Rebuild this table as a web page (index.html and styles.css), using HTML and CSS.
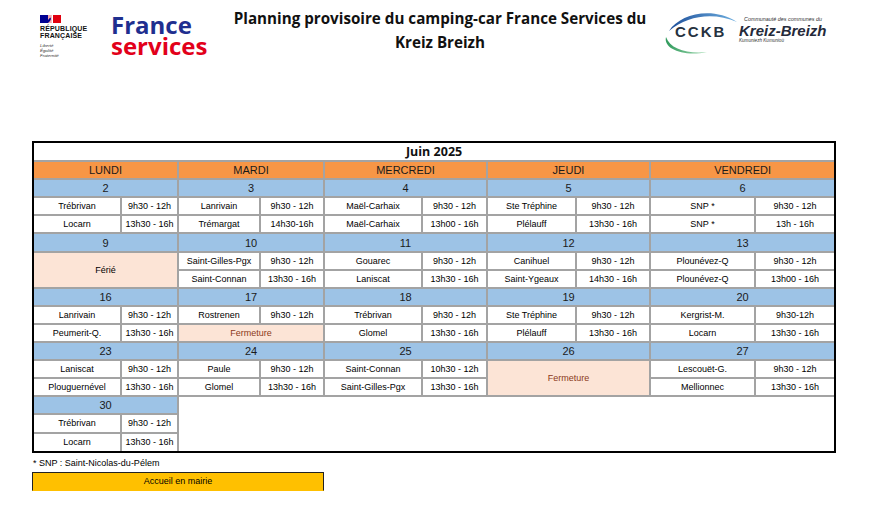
FILE: index.html
```html
<!DOCTYPE html>
<html lang="fr">
<head>
<meta charset="utf-8">
<title>Planning provisoire du camping-car France Services du Kreiz Breizh</title>
<link rel="stylesheet" href="styles.css">
</head>
<body>
<header class="top">
  <div class="rf">
    <svg class="rf-flag" width="21" height="8" viewBox="0 0 21 8">
      <rect x="0" y="0" width="8" height="8" fill="#000091"/>
      <rect x="13" y="0" width="8" height="8" fill="#e1000f"/>
      <path d="M8 0 L12 0 C11 1.5 12.5 2.5 11.5 4 C12.5 5 11 6.5 12 8 L8 8 Z" fill="#e1000f" opacity="0.35"/>
      <path d="M8 8 L8 5 C9 4 9.5 3 10.5 2.5 L11 4 L10 6 Z" fill="#000091"/>
    </svg>
    <div class="rf-name">RÉPUBLIQUE<br>FRANÇAISE</div>
    <div class="rf-motto">Liberté<br>Égalité<br>Fraternité</div>
  </div>
  <div class="fs">
    <div class="fs-france">France</div>
    <div class="fs-services">services</div>
  </div>
  <h1 class="title">Planning provisoire du camping-car France Services du<br>Kreiz Breizh</h1>
  <div class="cckb">
    <svg class="swoosh" width="80" height="52" viewBox="0 0 80 52">
      <defs>
        <linearGradient id="gb" x1="0" y1="0" x2="1" y2="0">
          <stop offset="0" stop-color="#1d4e9a"/>
          <stop offset="1" stop-color="#6fb0e0"/>
        </linearGradient>
        <linearGradient id="gg" x1="0" y1="0" x2="1" y2="0">
          <stop offset="0" stop-color="#2f9a5c"/>
          <stop offset="1" stop-color="#a6dcb4"/>
        </linearGradient>
      </defs>
      <path d="M9 25 C20 8 52 0 77 16 C54 6 28 9 9 25 Z" fill="url(#gb)"/>
      <path d="M6 31 C3 43 24 51 47 46 C27 48 10 43 6 31 Z" fill="url(#gg)"/>
    </svg>
    <div class="cckb-mark">CCKB</div>
    <div class="cckb-text">
      <div class="cckb-small">Communauté des communes du</div>
      <div class="cckb-name">Kreiz-Breizh</div>
      <div class="cckb-br">Kumuniezh Kumunioù</div>
    </div>
  </div>
</header>

<main class="sheet">
  <table class="plan">
    <colgroup>
      <col style="width:87px"><col style="width:57px">
      <col style="width:82px"><col style="width:64px">
      <col style="width:98px"><col style="width:65px">
      <col style="width:89px"><col style="width:74px">
      <col style="width:105px"><col style="width:79px">
    </colgroup>
    <tr><td class="month" colspan="10">Juin 2025</td></tr>
    <tr class="days">
      <td colspan="2">LUNDI</td><td colspan="2">MARDI</td><td colspan="2">MERCREDI</td><td colspan="2">JEUDI</td><td colspan="2">VENDREDI</td>
    </tr>

    <tr class="dates"><td colspan="2">2</td><td colspan="2">3</td><td colspan="2">4</td><td colspan="2">5</td><td colspan="2">6</td></tr>
    <tr><td>Trébrivan</td><td>9h30 - 12h</td><td>Lanrivain</td><td>9h30 - 12h</td><td>Maël-Carhaix</td><td>9h30 - 12h</td><td>Ste Tréphine</td><td>9h30 - 12h</td><td>SNP *</td><td>9h30 - 12h</td></tr>
    <tr><td>Locarn</td><td>13h30 - 16h</td><td>Trémargat</td><td>14h30-16h</td><td>Maël-Carhaix</td><td>13h00 - 16h</td><td>Plélauff</td><td>13h30 - 16h</td><td>SNP *</td><td>13h - 16h</td></tr>

    <tr class="dates"><td colspan="2">9</td><td colspan="2">10</td><td colspan="2">11</td><td colspan="2">12</td><td colspan="2">13</td></tr>
    <tr><td class="off" colspan="2" rowspan="2">Férié</td><td>Saint-Gilles-Pgx</td><td>9h30 - 12h</td><td>Gouarec</td><td>9h30 - 12h</td><td>Canihuel</td><td>9h30 - 12h</td><td>Plounévez-Q</td><td>9h30 - 12h</td></tr>
    <tr><td>Saint-Connan</td><td>13h30 - 16h</td><td>Laniscat</td><td>13h30 - 16h</td><td>Saint-Ygeaux</td><td>14h30 - 16h</td><td>Plounévez-Q</td><td>13h00 - 16h</td></tr>

    <tr class="dates"><td colspan="2">16</td><td colspan="2">17</td><td colspan="2">18</td><td colspan="2">19</td><td colspan="2">20</td></tr>
    <tr><td>Lanrivain</td><td>9h30 - 12h</td><td>Rostrenen</td><td>9h30 - 12h</td><td>Trébrivan</td><td>9h30 - 12h</td><td>Ste Tréphine</td><td>9h30 - 12h</td><td>Kergrist-M.</td><td>9h30-12h</td></tr>
    <tr><td>Peumerit-Q.</td><td>13h30 - 16h</td><td class="off closed" colspan="2">Fermeture</td><td>Glomel</td><td>13h30 - 16h</td><td>Plélauff</td><td>13h30 - 16h</td><td>Locarn</td><td>13h30 - 16h</td></tr>

    <tr class="dates"><td colspan="2">23</td><td colspan="2">24</td><td colspan="2">25</td><td colspan="2">26</td><td colspan="2">27</td></tr>
    <tr><td>Laniscat</td><td>9h30 - 12h</td><td>Paule</td><td>9h30 - 12h</td><td>Saint-Connan</td><td>10h30 - 12h</td><td class="off closed" colspan="2" rowspan="2">Fermeture</td><td>Lescouët-G.</td><td>9h30 - 12h</td></tr>
    <tr><td>Plouguernével</td><td>13h30 - 16h</td><td>Glomel</td><td>13h30 - 16h</td><td>Saint-Gilles-Pgx</td><td>13h30 - 16h</td><td>Mellionnec</td><td>13h30 - 16h</td></tr>

    <tr class="dates"><td colspan="2">30</td><td class="blank" colspan="8" rowspan="3"></td></tr>
    <tr><td>Trébrivan</td><td>9h30 - 12h</td></tr>
    <tr><td>Locarn</td><td>13h30 - 16h</td></tr>
  </table>
</main>

<p class="note">* SNP : Saint-Nicolas-du-Pélem</p>
<div class="mairie">Accueil en mairie</div>
</body>
</html>
```

FILE: styles.css
```css
* { box-sizing: border-box; }
html, body { margin: 0; padding: 0; background: #fff; }
body { font-family: "Liberation Sans", Arial, sans-serif; color: #000; width: 872px; }

.top {
  display: flex;
  height: 60px;
  padding-left: 40px;
}

.rf { width: 71px; padding-top: 15px; }
.rf-flag { display: block; }
.rf-name {
  margin-top: 3px;
  font-weight: bold;
  font-size: 7px;
  line-height: 6.6px;
  letter-spacing: 0.15px;
  color: #111;
}
.rf-motto {
  margin-top: 4px;
  font-style: italic;
  font-size: 4.4px;
  line-height: 5px;
  color: #333;
}

.fs { width: 114px; padding-top: 14px; font-family: "Open Sans", sans-serif; font-weight: bold; font-size: 24px; line-height: 21px; }
.fs-france { color: #1f2f8f; }
.fs-services { color: #e2001a; }

.title {
  width: 430px;
  margin: 0;
  padding-top: 6px;
  text-align: center;
  font-family: "Open Sans", sans-serif;
  font-weight: bold;
  font-size: 15.2px;
  line-height: 24px;
  color: #111;
}

.cckb { position: relative; width: 180px; display: flex; padding-left: 20px; }
.swoosh { position: absolute; left: 5px; top: 6px; }
.cckb-mark {
  position: relative;
  margin-top: 24px;
  font-weight: bold;
  font-size: 15px;
  line-height: 15px;
  letter-spacing: 2px;
  color: #26323f;
  width: 64px;
}
.cckb-text { padding-top: 16px; }
.cckb-small { font-size: 5.4px; line-height: 7px; font-style: italic; color: #333; padding-left: 5px; }
.cckb-name { font-weight: bold; font-style: italic; font-size: 15px; line-height: 15px; color: #252a3a; }
.cckb-br { font-size: 4.6px; line-height: 6px; font-style: italic; color: #333; }

.sheet {
  margin: 81px 0 0 32px;
  width: 804px;
  border: 2px solid #000;
}

.plan {
  width: 800px;
  table-layout: fixed;
  border-collapse: collapse;
  border-style: hidden;
  font-size: 9px;
}
.plan tr { height: 18.1px; }
.plan td {
  border: 2px solid #a3a3a3;
  padding: 0;
  text-align: center;
  vertical-align: middle;
  white-space: nowrap;
  overflow: hidden;
  line-height: 12px;
}
.plan td.month {
  font-family: "Open Sans", sans-serif;
  font-weight: bold;
  font-size: 12.5px;
  color: #111;
}
.plan .days td { background: #f79646; font-size: 11px; color: #1a1a1a; }
.plan .dates td { background: #9dc3e6; font-size: 11px; color: #1a1a1a; }
.plan .dates td.blank { background: #fff; }
.plan td.off { background: #fce4d6; }
.plan td.closed { color: #8b3a1a; }

.note {
  margin: 5px 0 0 33px;
  font-size: 9px;
  line-height: 11px;
}
.mairie {
  margin: 3px 0 0 32px;
  width: 292px;
  height: 19px;
  background: #ffc000;
  border: 1px solid #222;
  border-bottom-color: #ffc000;
  font-size: 9px;
  line-height: 17px;
  text-align: center;
}
```
